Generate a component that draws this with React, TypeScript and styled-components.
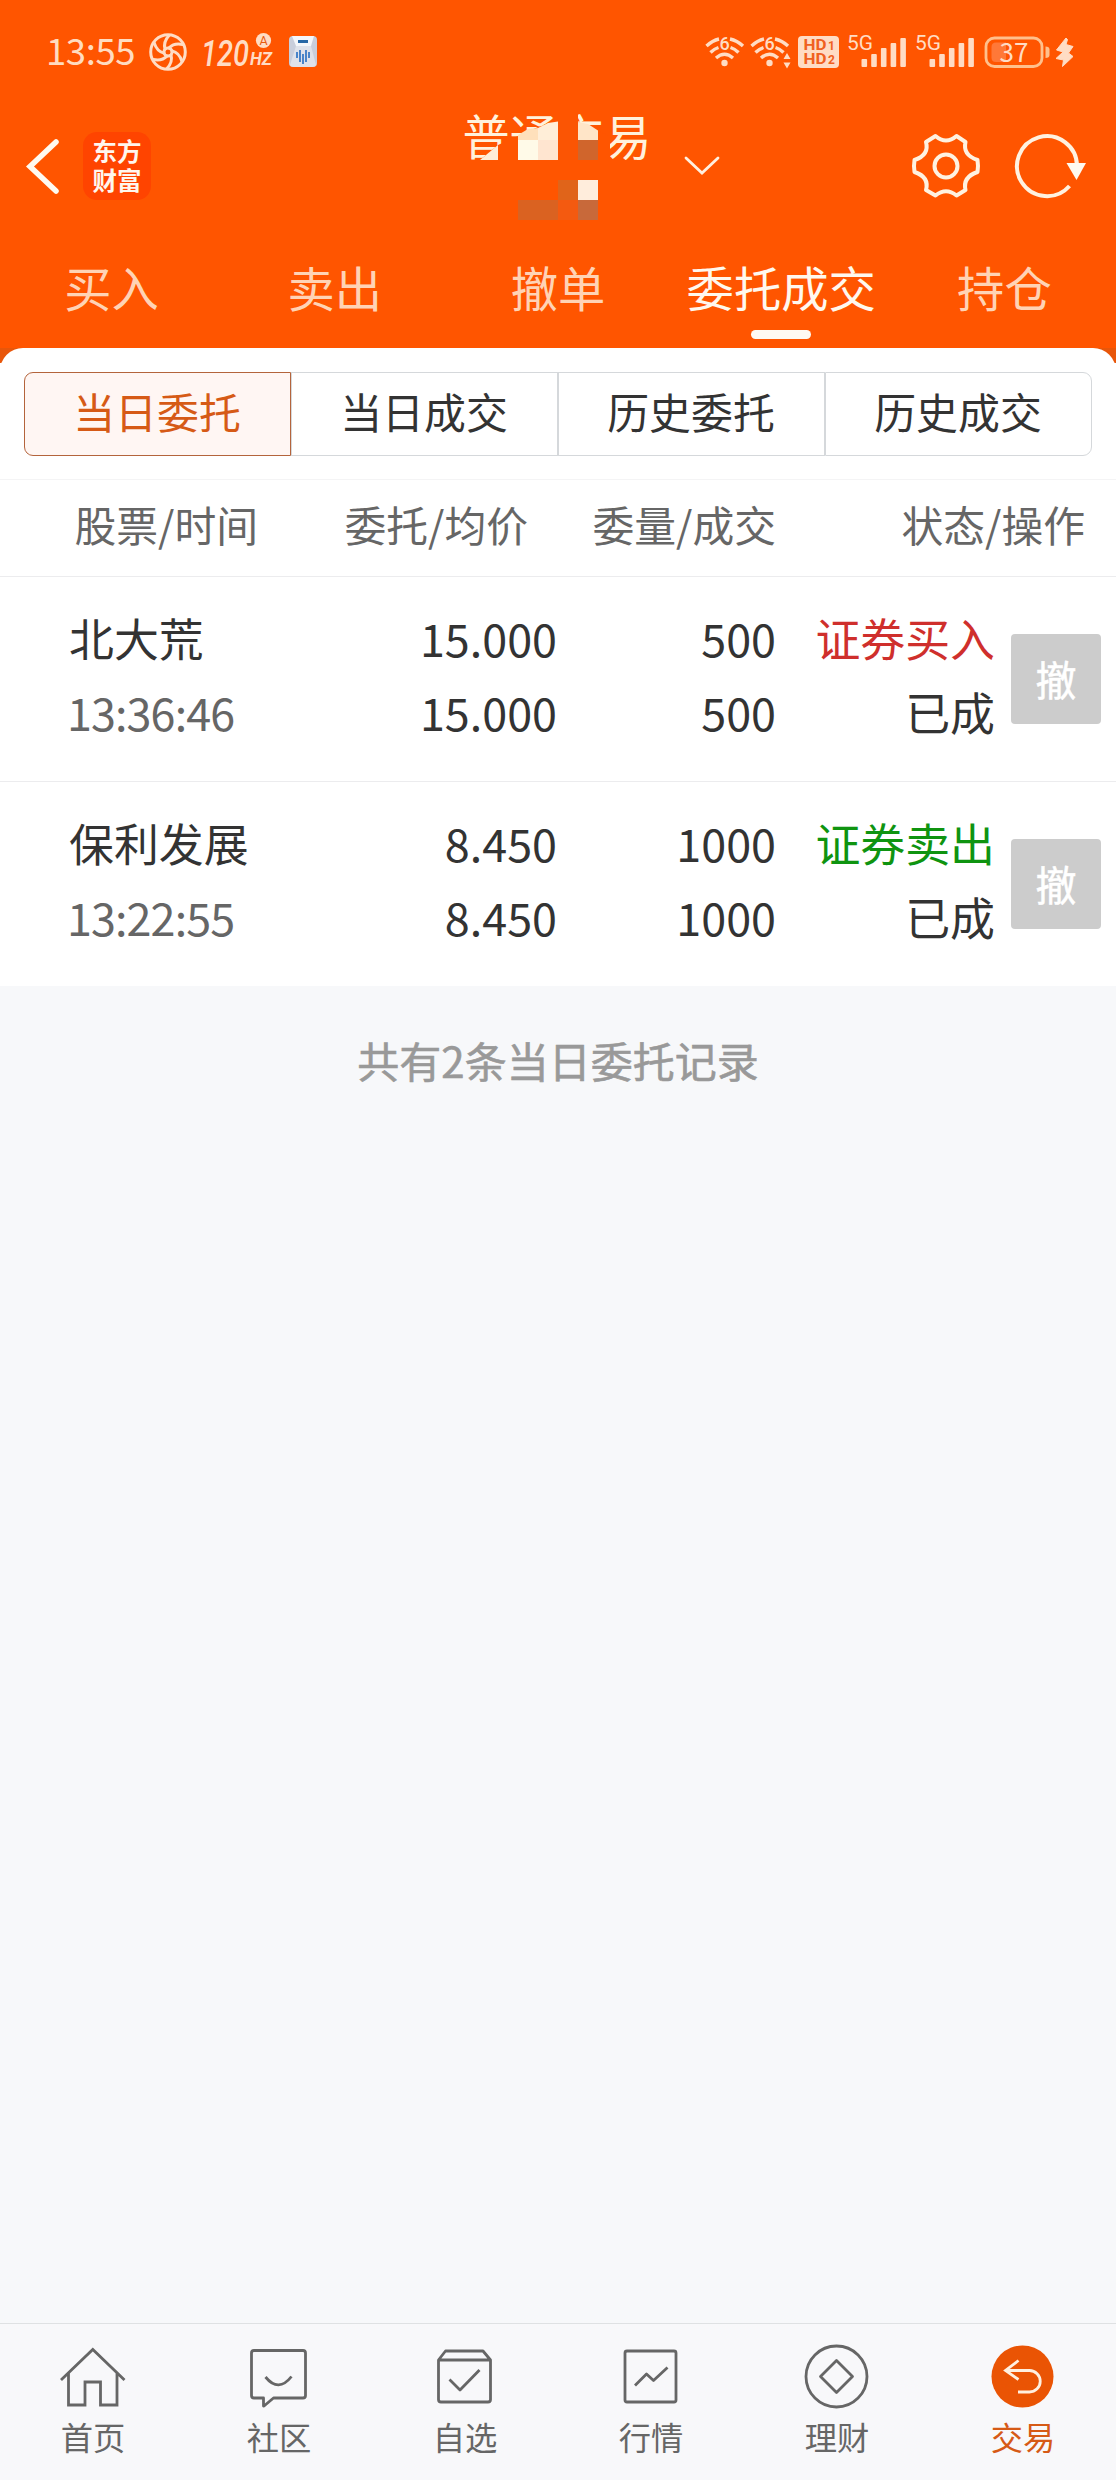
import React from "react";
import styled, { createGlobalStyle } from "styled-components";

const Global = createGlobalStyle`
  html, body { margin: 0; padding: 0; background: #f7f8fa; }
  * { box-sizing: border-box; }
  svg { overflow: visible; flex: none; }
`;

const Page = styled.div`
  width: 1116px;
  height: 2480px;
  display: flex;
  flex-direction: column;
  background: #f7f8fa;
  color: #333;
  font-family: "Noto Sans CJK SC", "Noto Sans", sans-serif;
  overflow: hidden;
`;

const Header = styled.header`
  height: 348px;
  flex: none;
  background: #ff5500;
  display: flex;
  flex-direction: column;
`;

const StatusBar = styled.div`
  height: 104px;
  display: flex;
  justify-content: space-between;
  padding: 0 40px 0 46px;
`;

const StatusLeft = styled.div`
  display: flex;
  height: 104px;
  align-items: center;
  gap: 13px;
`;

const StatusRight = styled.div`
  display: flex;
  height: 104px;
  align-items: center;
`;

const Sim = styled.div`
  display: flex;
  margin: 0 0 0 9px;
  & + & { margin: 0 8px; }
`;

const Clock = styled.span`
  width: 89px;
  font-size: 36.5px;
  line-height: 100px;
  height: 104px;
  letter-spacing: -0.4px;
  color: #ffdcc0;
`;

const TitleBar = styled.div`
  height: 124px;
  display: grid;
  grid-template-columns: 372px 1fr 372px;
`;

const TitleLeft = styled.div`
  display: flex;
  align-items: center;
  padding-left: 24px;
  gap: 21px;
`;

const Logo = styled.div`
  width: 68px;
  height: 68px;
  padding-bottom: 2px;
  border-radius: 14px;
  background: #ff4400;
  color: #fff6ee;
  font-size: 24.5px;
  line-height: 29px;
  font-weight: 700;
  display: flex;
  flex-direction: column;
  align-items: center;
  justify-content: center;
`;

const TitleCenter = styled.div`
  position: relative;
  display: flex;
  justify-content: center;
`;

const Title = styled.div`
  height: 64px;
  margin-right: 2px;
  font-size: 47.2px;
  line-height: 62px;
  color: #fff2dc;
`;

const Mosaic = styled.svg`
  position: absolute;
  left: 78px;
  top: 0;
`;

const Chevron = styled.svg`
  position: absolute;
  left: 308px;
  top: 48px;
`;

const TitleRight = styled.div`
  display: flex;
  justify-content: flex-end;
  align-items: center;
  gap: 34px;
  padding-right: 28px;
`;

const Tabs = styled.nav`
  height: 120px;
  display: grid;
  grid-template-columns: repeat(5, 1fr);
`;

const Tab = styled.div<{ $active?: boolean }>`
  display: flex;
  flex-direction: column;
  align-items: center;
  font-size: 47.3px;
  line-height: 70px;
  padding-top: 24px;
  color: ${(p) => (p.$active ? "#fff8ee" : "#ffd3b5")};
  &::after {
    content: "";
    width: 60px;
    height: 9px;
    margin-top: 8px;
    border-radius: 4.5px;
    background: ${(p) => (p.$active ? "#fffaf3" : "transparent")};
  }
`;

const PanelBack = styled.div`
  flex: none;
  background: linear-gradient(#e8560a 0 15px, #fff 15px);
`;

const Panel = styled.main`
  background: #fff;
  border-radius: 23px 23px 0 0;
  padding-top: 24px;
`;

const Segments = styled.div`
  margin: 0 24px 23px;
  height: 84px;
  display: grid;
  grid-template-columns: repeat(4, 267px);
`;

const Segment = styled.div<{ $active?: boolean }>`
  display: flex;
  justify-content: center;
  padding-right: 1px;
  font-size: 41.9px;
  line-height: 75px;
  border: 1px solid ${(p) => (p.$active ? "#b4643c" : "#d5d8db")};
  background: ${(p) => (p.$active ? "#fff6f3" : "#fff")};
  color: ${(p) => (p.$active ? "#d65a16" : "#333")};
  &:first-child { border-radius: 9px 0 0 9px; }
  &:last-child { border-radius: 0 9px 9px 0; }
`;

const Columns = styled.div`
  height: 98px;
  border-top: 1px solid #f4f4f5;
  border-bottom: 1px solid #ececee;
  display: grid;
  grid-template-columns: 258px 270px 248px 309px;
  color: #666;
  font-size: 41.8px;
  line-height: 89px;
  text-align: right;
`;

const Row = styled.div`
  height: 205px;
  border-bottom: 1px solid #ececee;
  display: grid;
  grid-template-columns: 200px 288px 219px 219px 106px;
  padding: 24px 0 0 69px;
  &:last-child { border-bottom: 0; height: 204px; }
`;

const Cell = styled.div<{ $left?: boolean }>`
  display: flex;
  flex-direction: column;
  align-items: ${(p) => (p.$left ? "flex-start" : "flex-end")};
  font-size: 44.9px;
  line-height: 74px;
  white-space: nowrap;
`;

const Line = styled.span<{ $color?: string }>`
  color: ${(p) => p.$color ?? "#333"};
`;

const Time = styled.span`
  margin-left: -2px;
  letter-spacing: -0.9px;
  color: #666;
`;

const CancelButton = styled.div`
  justify-self: end;
  margin-top: 33px;
  width: 90px;
  height: 90px;
  border-radius: 4px;
  background: #ccc;
  color: #fff;
  font-size: 41px;
  line-height: 88px;
  text-align: center;
  -webkit-text-stroke: 0.5px #fff;
`;

const Summary = styled.div`
  flex: 1;
  padding-top: 44px;
  text-align: center;
  color: #999;
  font-size: 42px;
  line-height: 60px;
  -webkit-text-stroke: 0.6px #999;
`;

const BottomNav = styled.footer`
  flex: none;
  height: 157px;
  border-top: 1px solid #dfe1e3;
  background: #f8f8fa;
  display: grid;
  grid-template-columns: repeat(6, 1fr);
`;

const NavItem = styled.div<{ $active?: boolean }>`
  display: flex;
  flex-direction: column;
  align-items: center;
  padding-top: 18px;
  font-size: 32.3px;
  line-height: 46px;
  color: ${(p) => (p.$active ? "#d65a16" : "#666")};
  svg { display: block; margin-bottom: 3px; }
`;

const pale = "#ffdcc4";

const Aperture = () => (
  <svg width="40" height="40" viewBox="0 0 40 40" fill="none" stroke={pale} strokeWidth="3" strokeLinecap="round">
    <circle cx="20" cy="20" r="17.3" />
    <circle cx="20" cy="20" r="4" />
    {[0, 60, 120, 180, 240, 300].map((a) => (
      <path key={a} d="M17 17Q15 10 21 3.500" transform={`rotate(${a} 20 20)`} />
    ))}
  </svg>
);

const RefreshRate = () => (
  <svg width="74" height="44" viewBox="0 0 74 44" fontFamily="Roboto, sans-serif" fontStyle="italic" fill={pale}>
    <text x="0" y="35.500" fontSize="37" fontWeight="500" textLength="48" lengthAdjust="spacingAndGlyphs">120</text>
    <text x="49" y="34.500" fontSize="18" fontWeight="700" textLength="22" lengthAdjust="spacingAndGlyphs">HZ</text>
    <circle cx="62.500" cy="10.500" r="7.600" />
    <text x="62.500" y="15" fontSize="12.500" fontStyle="normal" textAnchor="middle" fill="#e85a10">A</text>
  </svg>
);

const AppBadge = () => (
  <svg width="30" height="34" viewBox="0 0 30 34">
    <rect x="1" y="1" width="28" height="31" rx="4" fill="#c9cedb" />
    <path d="M4 1h22l-3 10H8z" fill="#f4f6fa" />
    <path d="M8 11h15l5 19q-1 2-4 2H6q-3 0-4-2z" fill="#dfe2ea" />
    <rect x="10" y="5" width="10" height="3" fill="#2767a5" />
    <path d="M9 17v6M12 15v12M15 19v10M18 15v12M21 17v6" stroke="#2f74c4" strokeWidth="1.700" />
  </svg>
);

const Wifi = ({ data }: { data?: boolean }) => (
  <svg width="45" height="40" viewBox="0 0 45 40" fill="none" stroke={pale} strokeWidth="3.400">
    <path d="M1.500 14Q7.500 8.500 14 7M25 7Q32 8.500 38 14M5.500 20.500Q9 17 13.500 15.500M25.500 15.500Q30 17 33.500 20.500M11 26Q19.500 18.500 28 26" />
    <circle cx="19.500" cy="31" r="3.200" fill={pale} stroke="none" />
    <text x="19.500" y="18" fontSize="18" fontFamily="Roboto, sans-serif" fontWeight="500" textAnchor="middle" fill={pale} stroke="none">6</text>
    {data && <path d="M33.500 27l3.500-6 3.500 6zM33.500 30.500l3.500 6 3.500-6z" fill={pale} stroke="none" />}
  </svg>
);

const HdBox = styled.svg`
  margin-left: 3px;
`;

const HdBadge = () => (
  <HdBox width="41" height="34" viewBox="0 0 41 34" fontFamily="Roboto, sans-serif" fontWeight="700" fill="#f06020">
    <rect x="0" y="1" width="41" height="32" rx="4" fill={pale} />
    <text x="5.500" y="15" fontSize="14" textLength="23" lengthAdjust="spacingAndGlyphs">HD</text>
    <text x="30" y="15" fontSize="12">1</text>
    <text x="5.500" y="29" fontSize="14" textLength="23" lengthAdjust="spacingAndGlyphs">HD</text>
    <text x="30" y="29" fontSize="12">2</text>
  </HdBox>
);

const Signal = () => (
  <svg width="60" height="36" viewBox="0 0 60 36" fill={pale}>
    <text x="-1" y="15.500" fontSize="21" fontFamily="Roboto, sans-serif" textLength="26" lengthAdjust="spacingAndGlyphs">5G</text>
    {[8, 13, 19, 24, 29].map((h, i) => (
      <rect key={h} x={13.5 + i * 9.7} y={33 - h} width="5.600" height={h} rx="1" />
    ))}
  </svg>
);

const Battery = () => (
  <svg width="92" height="36" viewBox="0 0 92 36">
    <rect x="2" y="4" width="56" height="28.500" rx="8.500" fill="none" stroke="#ffc08c" strokeWidth="2.800" />
    <path d="M12 8.500h10v19.500h-10q-4.500 0-4.500-4.500v-10.500q0-4.500 4.500-4.500z" fill="#ff7838" />
    <path d="M61.500 12.500v11.500q4 0 4-3v-5.500q0-3-4-3z" fill="#ffc08c" />
    <text x="30" y="27.500" fontSize="26" fontFamily="Noto Sans CJK SC, sans-serif" textAnchor="middle" fill={pale}>37</text>
    <path d="M82 4L72.500 16l6.500 2-7 6.500 7.500 1.500-1 6.500 10.500-10-4.500-3.500 4.500-6.500-7-2 1.500-5z" fill={pale} stroke={pale} strokeLinejoin="round" />
  </svg>
);

const Redaction = () => (
  <Mosaic width="140" height="124" viewBox="450 104 140 124">
    <path d="M480 160L498 145L518 136L538 127L558 121V108H578V122L598 131L610 136V166H480z" fill="#ff5500" />
    <path d="M558 120h20v40h-20z" fill="#fb5504" />
    <path d="M480 160L498 145V160z" fill="#ffeed8" />
    <path d="M518 135L528 129L538 128V140H518z" fill="#ffe0bb" />
    <path d="M538 128L548 123L558 121.500V140H538z" fill="#ffeed8" />
    <path d="M518 140h20v20h-20z" fill="#fffae8" />
    <path d="M538 140h20v20h-20z" fill="#ffe5d0" />
    <path d="M578 122L588 124L598 130.500V140H578z" fill="#ffe5c8" />
    <path d="M578 140h20v20h-20z" fill="#d0652c" />
    <path d="M558 180h20v20h-20z" fill="#e0641a" />
    <path d="M578 180h20v20h-20z" fill="#ffeddc" />
    <path d="M518 200h40v20h-40z" fill="#da6221" />
    <path d="M558 200h20v20h-20z" fill="#f45a10" />
    <path d="M578 200h20v20h-20z" fill="#c8693a" />
  </Mosaic>
);

const icon = { width: 66, height: 68, fill: "none", stroke: "currentColor", strokeWidth: 2.8 } as const;

const NAV = [
  { label: "首页", art: (
    <svg {...icon} viewBox="60 2342 66 68"><path d="M61 2380L92.800 2349.500L124.500 2380M68.500 2373V2405H85V2382H100.500V2405H117V2373" /></svg>
  ) },
  { label: "社区", art: (
    <svg {...icon} viewBox="246 2342 66 68" strokeLinejoin="round"><path d="M254 2350.500H303Q305.500 2350.500 305.500 2353V2395.500Q305.500 2398 303 2398H273.500L264 2406H263.500V2398H254Q251.500 2398 251.500 2395.500V2353Q251.500 2350.500 254 2350.500zM265.500 2377Q278.500 2393 291.500 2376.500" /></svg>
  ) },
  { label: "自选", art: (
    <svg {...icon} viewBox="432 2342 66 68" strokeLinejoin="round"><path d="M438.500 2360L445.500 2351H483L490.500 2360V2399.500Q490.500 2402 488 2402H441Q438.500 2402 438.500 2399.500zH490.500M449.500 2379.500L460 2390L479.500 2370" /></svg>
  ) },
  { label: "行情", art: (
    <svg {...icon} viewBox="618 2342 66 68" strokeLinejoin="round"><rect x="625" y="2351" width="51" height="51" rx="2" /><path d="M635 2385.500L646.500 2374L653.500 2380.500L667.500 2367.500" /></svg>
  ) },
  { label: "理财", art: (
    <svg {...icon} viewBox="804 2342 66 68" strokeLinejoin="round"><circle cx="836.500" cy="2376.500" r="30.500" /><path d="M836.500 2360.500L852.500 2376.500L836.500 2392.500L820.500 2376.500z" /></svg>
  ) },
  { label: "交易", active: true, art: (
    <svg {...icon} viewBox="990 2342 66 68" stroke="#fff0e0"><circle cx="1022.500" cy="2376.500" r="31" fill="#ea5404" stroke="none" /><path d="M1018.500 2360.500L1005.500 2370.500L1018.500 2379.500M1005.500 2370.500H1029.500A10.750 10.750 0 0 1 1029.500 2392H1018" /></svg>
  ) },
];

const ORDERS = [
  { name: "北大荒", time: "13:36:46", price: "15.000", qty: "500", side: "证券买入", color: "#cf2f2c" },
  { name: "保利发展", time: "13:22:55", price: "8.450", qty: "1000", side: "证券卖出", color: "#0f9410" },
];

export default function App() {
  return (
    <Page>
      <Global />
      <Header>
        <StatusBar>
          <StatusLeft><Clock>13:55</Clock><Aperture /><RefreshRate /><AppBadge /></StatusLeft>
          <StatusRight>
            <Wifi /><Wifi data /><HdBadge />
            <Sim><Signal /></Sim><Sim><Signal /></Sim>
            <Battery />
          </StatusRight>
        </StatusBar>
        <TitleBar>
          <TitleLeft>
            <svg width="38" height="60" viewBox="24 136 38 60" fill="none" stroke="#fffaf0" strokeWidth="5.500" strokeLinecap="round"><path d="M56 142L30 166.500L56 191" /></svg>
            <Logo><span>东方</span><span>财富</span></Logo>
          </TitleLeft>
          <TitleCenter>
            <Title>普通交易</Title>
            <Redaction />
            <Chevron width="40" height="24" viewBox="0 0 40 24" fill="none" stroke="#fff0e0" strokeWidth="2.800" strokeLinecap="round"><path d="M6 6L22 21L38 6" /></Chevron>
          </TitleCenter>
          <TitleRight>
            <svg width="68" height="68" viewBox="912.500 132 68 68" fill="none" stroke="#fff2e0" strokeWidth="4" strokeLinejoin="round">
              <path d="M936 136Q946.500 145 957 136L966 142Q963 155 978 160Q979 166 978 172Q963 177 966 190L957 195.500Q946.500 187 936 195.500L926.500 190Q930 177 915 172Q914 166 915 160Q930 155 926.500 142z" />
              <circle cx="946.500" cy="166" r="11.500" />
            </svg>
            <svg width="74" height="68" viewBox="1014 132 74 68" fill="none" stroke="#fff2e0" strokeWidth="4">
              <path d="M1077 166A30 30 0 1 0 1069.500 186" /><path d="M1066.500 163H1086L1076.500 180z" fill="#fffaf0" stroke="none" />
            </svg>
          </TitleRight>
        </TitleBar>
        <Tabs>
          <Tab>买入</Tab><Tab>卖出</Tab><Tab>撤单</Tab><Tab $active>委托成交</Tab><Tab>持仓</Tab>
        </Tabs>
      </Header>
      <PanelBack>
        <Panel>
          <Segments>
            <Segment $active>当日委托</Segment><Segment>当日成交</Segment><Segment>历史委托</Segment><Segment>历史成交</Segment>
          </Segments>
          <Columns><span>股票/时间</span><span>委托/均价</span><span>委量/成交</span><span>状态/操作</span></Columns>
          {ORDERS.map((o) => (
            <Row key={o.time}>
              <Cell $left><Line>{o.name}</Line><Time>{o.time}</Time></Cell>
              <Cell><Line>{o.price}</Line><Line>{o.price}</Line></Cell>
              <Cell><Line>{o.qty}</Line><Line>{o.qty}</Line></Cell>
              <Cell><Line $color={o.color}>{o.side}</Line><Line>已成</Line></Cell>
              <CancelButton>撤</CancelButton>
            </Row>
          ))}
        </Panel>
      </PanelBack>
      <Summary>共有2条当日委托记录</Summary>
      <BottomNav>
        {NAV.map((n) => (
          <NavItem key={n.label} $active={n.active}>{n.art}<span>{n.label}</span></NavItem>
        ))}
      </BottomNav>
    </Page>
  );
}
